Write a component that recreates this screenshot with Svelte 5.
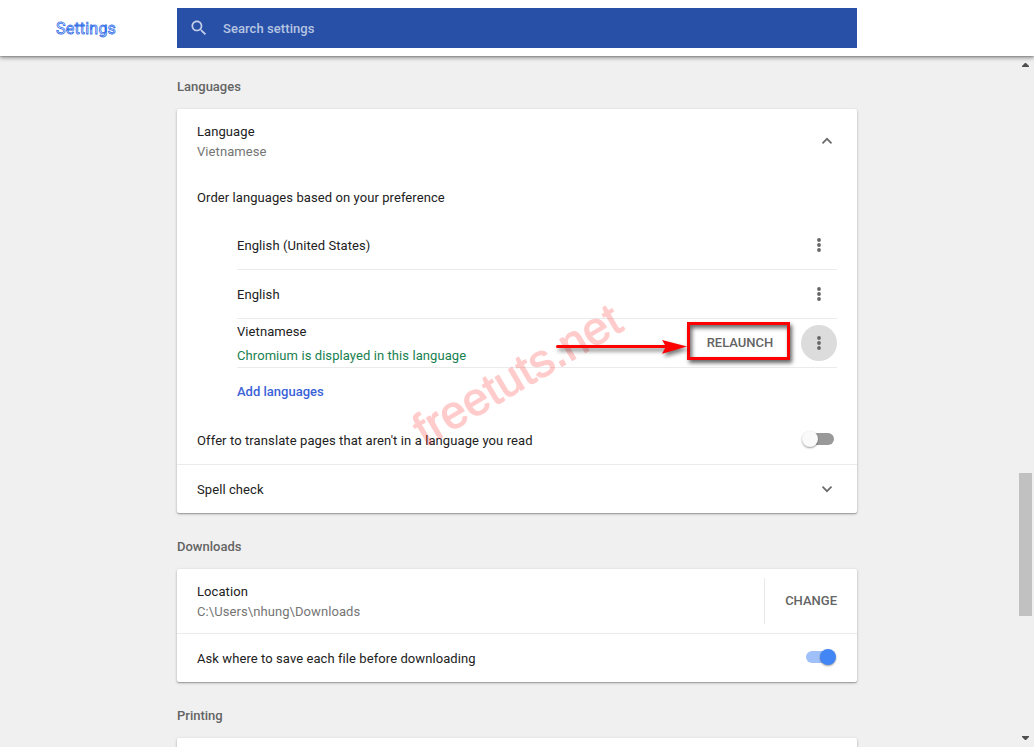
<script>
  const languages = [
    { name: 'English (United States)' },
    { name: 'English' },
    { name: 'Vietnamese', note: 'Chromium is displayed in this language', active: true }
  ];
</script>

{#snippet dots()}
  <svg width="18" height="18" viewBox="0 0 18 18" fill="#666">
    <circle cx="9" cy="4" r="1.9" /><circle cx="9" cy="9" r="1.9" /><circle cx="9" cy="14" r="1.9" />
  </svg>
{/snippet}

<div class="page">
  <header>
    <h1>Settings</h1>
    <div class="search">
      <svg width="20" height="20" viewBox="0 0 24 24" fill="#c5d0e8"><path d="M15.5 14h-.79l-.28-.27C15.41 12.59 16 11.11 16 9.5 16 5.91 13.09 3 9.5 3S3 5.91 3 9.5 5.91 16 9.5 16c1.61 0 3.09-.59 4.23-1.57l.27.28v.79l5 4.99L20.49 19l-4.99-5zm-6 0C7.01 14 5 11.99 5 9.5S7.01 5 9.5 5 14 7.01 14 9.5 11.99 14 9.5 14z" /></svg>
      <span>Search settings</span>
    </div>
  </header>

  <div class="body">
    <main>
      <h2>Languages</h2>
      <section class="card">
        <div class="row two">
          <div class="grow">
            <div>Language</div>
            <div class="sub">Vietnamese</div>
          </div>
          <svg class="chev" width="12" height="8" viewBox="0 0 12 8"><path d="M1.5 6.3 6 1.8l4.5 4.5" /></svg>
        </div>
        <div class="row"><div class="grow">Order languages based on your preference</div></div>
        <div class="list">
          {#each languages as lang}
            <div class="lang">
              <div class="grow" class:stack={lang.note}>
                <div>{lang.name}</div>
                {#if lang.note}<div class="note">{lang.note}</div>{/if}
              </div>
              {#if lang.active}
                <div class="relaunch">
                  RELAUNCH
                  <svg class="arrow" width="134" height="24" viewBox="0 0 134 24">
                    <path d="M1.5 10.5H110" stroke="#f00" stroke-width="3" stroke-linecap="round" />
                    <path d="M131 10.5 106 4l4 6.5-4 7.2z" fill="#f00" />
                  </svg>
                </div>
              {/if}
              <div class="more" class:active={lang.active}>{@render dots()}</div>
            </div>
          {/each}
        </div>
        <div class="row add">Add languages</div>
        <div class="row">
          <div class="grow offer">Offer to translate pages that aren't in a language you read</div>
          <div class="toggle off"><i></i></div>
        </div>
        <div class="row line">
          <div class="grow">Spell check</div>
          <svg class="chev" width="12" height="8" viewBox="0 0 12 8"><path d="M1.5 1.7 6 6.2l4.5-4.5" /></svg>
        </div>
        <svg class="mark" width="240" height="170" viewBox="0 0 240 170">
          <text transform="translate(25 157) rotate(-30.5)" textLength="232">freetuts.net</text>
        </svg>
      </section>

      <h2>Downloads</h2>
      <section class="card">
        <div class="row two">
          <div class="grow">
            <div>Location</div>
            <div class="sub">C:\Users\nhung\Downloads</div>
          </div>
          <div class="change">CHANGE</div>
        </div>
        <div class="row line">
          <div class="grow">Ask where to save each file before downloading</div>
          <div class="toggle on"><i></i></div>
        </div>
      </section>

      <h2>Printing</h2>
      <section class="card"><div class="row"></div></section>
    </main>
    <div class="scroll">
      <svg width="7" height="4" viewBox="0 0 7 4" fill="#505050"><path d="M0 4V3l3-3h1l3 3v1z" /></svg>
      <div class="thumb"></div>
      <svg width="7" height="4" viewBox="0 0 7 4" fill="#505050"><path d="M0 0v1l3 3h1l3-3V0z" /></svg>
    </div>
  </div>
</div>

<style>
  :global(body) { overflow: hidden; }
  .page {
    width: 1034px; height: 747px; overflow: hidden; box-sizing: border-box;
    display: flex; flex-direction: column; background: #f0f0f0;
    font: 13px/20px Roboto, sans-serif; color: #212121;
  }
  header {
    flex: none; height: 56px; background: #fff; display: flex; align-items: center;
    box-shadow: 0 1px 1px rgba(0,0,0,.12), 0 2px 4px rgba(0,0,0,.38); position: relative; z-index: 1;
  }
  h1 {
    margin: 0; padding: 2px 0 0 56px; width: 121px; font-size: 16px; font-weight: 400;
    letter-spacing: .2px; color: #fff; -webkit-text-stroke: .8px #2f6de8;
  }
  .search {
    width: 680px; height: 40px; box-sizing: border-box; padding-left: 12px; background: #2850a7;
    display: flex; align-items: center; gap: 14px; color: #b7c5e2; font-weight: 500; letter-spacing: .07px;
  }
  .search span { padding-top: 2px; }
  .body { flex: 1; min-height: 0; display: flex; }
  main { width: 680px; margin-left: 177px; margin-right: 160px; }
  h2 {
    margin: 0; height: 56px; box-sizing: border-box; padding-top: 24px;
    font-size: 13px; line-height: 20px; font-weight: 500; color: #646464;
  }
  h2:first-child { height: 53px; padding-top: 21px; }
  .card {
    position: relative; background: #fff; border-radius: 2px;
    box-shadow: 0 1px 1px rgba(0,0,0,.2), 0 1px 3px rgba(0,0,0,.25);
  }
  .row { height: 48px; padding: 0 20px; display: flex; align-items: center; }
  .row.two { height: 64px; }
  .row.line { border-top: 1px solid #ebebeb; }
  .grow { flex: 1; padding-top: 2px; letter-spacing: .08px; }
  .offer { letter-spacing: .1px; }
  .sub { color: #757575; }
  .chev { margin-right: 4px; fill: none; stroke: #6a6a6a; stroke-width: 1.7; }
  .list { padding: 0 20px 0 60px; }
  .lang { height: 48px; border-bottom: 1px solid #ebebeb; display: flex; align-items: center; }
  .stack { line-height: 24px; }
  .note { color: #188050; }
  .more {
    width: 36px; height: 36px; border-radius: 50%; display: flex; align-items: center; justify-content: center;
  }
  .more.active { background: #dcdcdc; }
  .relaunch {
    position: relative; width: 103px; height: 38px; box-sizing: border-box; margin: -5px 11px 0 0;
    border: 3px solid #f00; display: flex; align-items: center; justify-content: center;
    padding: 5px 0 0 3px; color: #646464; font-weight: 500;
    box-shadow: 2px 3px 4px rgba(0,0,0,.6), inset 2px 3px 4px rgba(0,0,0,.6);
  }
  .arrow {
    position: absolute; left: -134px; top: 11px; overflow: visible; z-index: 2;
    filter: drop-shadow(2px 3px 2px rgba(0,0,0,.55));
  }
  .add { padding-left: 60px; color: #3a62d8; font-weight: 500; }
  .toggle { position: relative; width: 28px; height: 12px; border-radius: 6px; }
  .toggle i {
    position: absolute; top: -2px; width: 16px; height: 16px; border-radius: 50%;
    box-shadow: 0 1px 2px rgba(0,0,0,.4);
  }
  .off { background: #999; margin: -2px 3px 0 0; }
  .off i { left: -4px; background: #fafafa; }
  .on { background: #a0c0fa; margin: -2px 3px 0 0; }
  .on i { right: -2px; background: #4285f4; }
  .change {
    height: 46px; width: 73px; box-sizing: border-box; border-left: 1px solid #e9e9e9;
    line-height: 45px; text-align: right; color: #646464; font-weight: 500; white-space: nowrap;
  }
  .mark { position: absolute; left: 223px; top: 181px; pointer-events: none; overflow: visible; opacity: .2; }
  .mark text { font: 46px "Liberation Sans", sans-serif; fill: #f00; stroke: #f00; stroke-width: 1.3; stroke-linejoin: round; }
  .scroll {
    width: 17px; padding: 7px 0; box-sizing: border-box;
    display: flex; flex-direction: column; align-items: center; justify-content: space-between;
  }
  .thumb { width: 13px; height: 143px; margin-top: 286px; background: #c1c1c1; }
</style>
